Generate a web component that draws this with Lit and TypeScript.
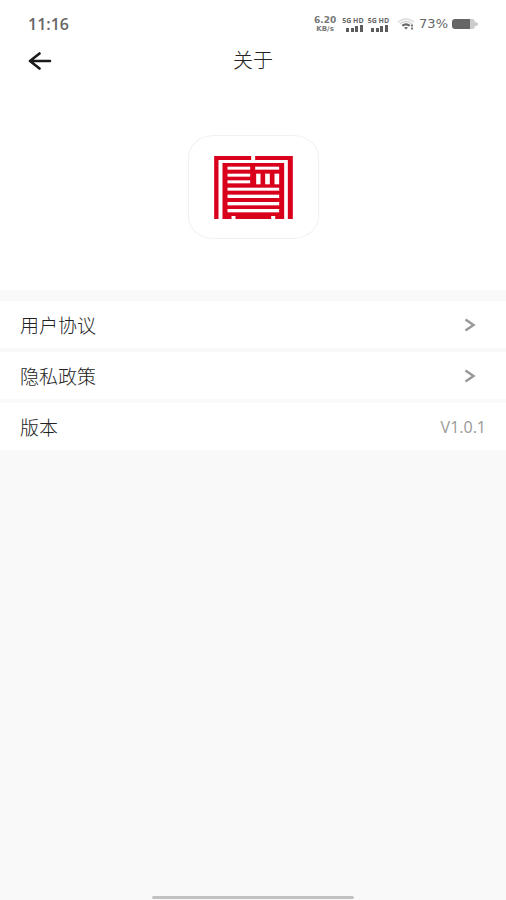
import { LitElement, html, svg, css } from "lit";
import { customElement, property } from "lit/decorators.js";

@customElement("status-bar")
class StatusBar extends LitElement {
  static styles = css`
    :host {
      display: flex;
      align-items: center;
      justify-content: space-between;
      height: 48px;
      padding: 0 28px;
      color: #666;
      font-weight: 600;
    }
    .time { font-size: 16px; }
    .right { display: flex; align-items: center; gap: 4px; }
    .rate {
      display: flex;
      flex-direction: column;
      align-items: center;
      margin-right: 2px;
      color: #777;
      font: bold 7px/8px "DejaVu Sans", sans-serif;
    }
    .rate b { font-size: 9px; line-height: 10px; }
    .sim {
      display: flex;
      flex-direction: column;
      align-items: flex-end;
      gap: 1px;
      font-size: 7px;
      line-height: 7px;
      font-weight: 700;
    }
    .percent { font: 13px/16px "DejaVu Sans", sans-serif; }
    .wifi { margin-left: 4px; }
    svg { display: block; }
  `;

  private sim() {
    return html`<span class="sim">5G HD
      <svg width="18" height="7" viewBox="0 0 18 7" fill="#5c5c5c" aria-hidden="true">
        <rect x="0" y="3" width="3" height="4" /><rect x="5" y="3" width="3" height="4" />
        <rect x="9" y="1" width="3" height="6" /><rect x="14" y="0" width="3" height="7" />
      </svg></span>`;
  }

  render() {
    return html`
      <span class="time">11:16</span>
      <span class="right">
        <span class="rate"><b>6.20</b><span>KB/s</span></span>
        ${this.sim()} ${this.sim()}
        <svg class="wifi" width="18" height="12" viewBox="0 0 18 12" fill="none" aria-hidden="true">
          <path d="M1 4Q9-2 17 4" stroke="#e2e2e2" stroke-width="2" />
          <path d="M3 6Q9 1 15 6" stroke="#d4d4d4" stroke-width="1.5" />
          <path d="M4.500 7Q9 3.500 13.500 7L12 8.500Q9 6.500 6 8.500Z" fill="#666" />
          <path d="M7 9.500Q9 8.500 11 9.500L9 11.500Z" fill="#666" />
          <path d="M14 6.500h2v2h-2zM14 9.500h2v2h-2z" fill="#777" />
        </svg>
        <span class="percent">73%</span>
        <svg width="26" height="10" viewBox="0 0 26 10" aria-hidden="true">
          <path d="M17 0h3q3 0 3 3q3 0 3 2t-3 2q0 3-3 3h-3z" fill="#ccc" />
          <path d="M3 0h15v10H3q-3 0-3-3V3q0-3 3-3z" fill="#666" />
        </svg>
      </span>
    `;
  }
}

@customElement("seal-logo")
class SealLogo extends LitElement {
  static styles = css`
    :host {
      display: grid;
      place-items: center;
      box-sizing: border-box;
      width: 131px;
      height: 104px;
      border: 1px solid #f1f1f1;
      border-radius: 26px / 22px;
      background: #fff;
    }
    svg { display: block; }
  `;

  render() {
    const bars = [
      [142, 124, 68, 9], [142, 145, 68, 9], [142, 165, 68, 9], [225, 124, 72, 9],
      [228, 145, 13, 32], [255, 145, 14, 32], [283, 145, 14, 32],
      [142, 187, 155, 9], [142, 208, 155, 10], [142, 230, 155, 10], [142, 251, 155, 10],
      [154, 272, 12, 9], [273, 272, 12, 9],
    ];
    return html`
      <svg width="79" height="63" viewBox="102 92 236 189" role="img" aria-label="Logo">
        <path fill="#d9001b" d="M102 281V92H213V104H115V281ZM338 281V92H225V104H323V281ZM127 113H312V281H127Z" />
        ${bars.map(([x, y, w, h]) => svg`<rect x=${x} y=${y} width=${w} height=${h} fill="#fff" />`)}
      </svg>
    `;
  }
}

@customElement("about-row")
class AboutRow extends LitElement {
  @property() label = "";
  @property() value = "";

  static styles = css`
    :host { display: block; background: #fff; color: #222; }
    .row {
      display: flex;
      align-items: center;
      justify-content: space-between;
      height: 47px;
      padding: 0 20px;
      font-size: 19px;
      font-weight: 300;
      color: inherit;
      text-decoration: none;
    }
    .value { font-size: 16px; font-weight: 400; color: #999; }
    .chevron { display: block; margin-right: 10px; }
  `;

  render() {
    return this.value
      ? html`<div class="row"><span>${this.label}</span><span class="value">${this.value}</span></div>`
      : html`<a class="row" href="#"><span>${this.label}</span>
          <svg class="chevron" width="12" height="14" viewBox="0 0 12 14" fill="none" stroke="#999" stroke-width="2.500" aria-hidden="true">
            <path d="M1.500 1.500L9.500 7L1.500 12.500" />
          </svg></a>`;
  }
}

@customElement("app-root")
class AppRoot extends LitElement {
  static styles = css`
    :host {
      display: flex;
      flex-direction: column;
      min-height: 100vh;
      background: #f9f9f9;
      font-family: "Open Sans", "Noto Sans CJK SC", sans-serif;
    }
    .top { background: #fff; }
    .bar {
      display: grid;
      grid-template-columns: 1fr auto 1fr;
      align-items: center;
      height: 26px;
      padding: 0 26px;
    }
    .back {
      justify-self: start;
      padding: 2px;
      border: 0;
      background: none;
    }
    .back svg { display: block; }
    h1 {
      margin: 0;
      font-size: 20px;
      line-height: 26px;
      font-weight: 300;
      color: #222;
    }
    .brand { display: flex; justify-content: center; padding: 61px 0 51px; }
    .list { display: flex; flex-direction: column; gap: 4px; margin-top: 11px; }
    .home {
      width: 40%;
      height: 3px;
      margin: auto auto 1px;
      border-radius: 2px;
      background: #c2c2c2;
    }
  `;

  render() {
    return html`
      <div class="top">
        <status-bar></status-bar>
        <header class="bar">
          <button class="back" aria-label="返回">
            <svg width="24" height="18" viewBox="0 0 24 18" fill="none" stroke="#1a1a1a" stroke-width="2.600" stroke-linecap="round" stroke-linejoin="round">
              <path d="M11.500 1.500L2 9L11.500 16.500M2 9H22" />
            </svg>
          </button>
          <h1>关于</h1>
        </header>
        <div class="brand"><seal-logo></seal-logo></div>
      </div>
      <main class="list">
        <about-row label="用户协议"></about-row>
        <about-row label="隐私政策"></about-row>
        <about-row label="版本" value="V1.0.1"></about-row>
      </main>
      <div class="home"></div>
    `;
  }
}
